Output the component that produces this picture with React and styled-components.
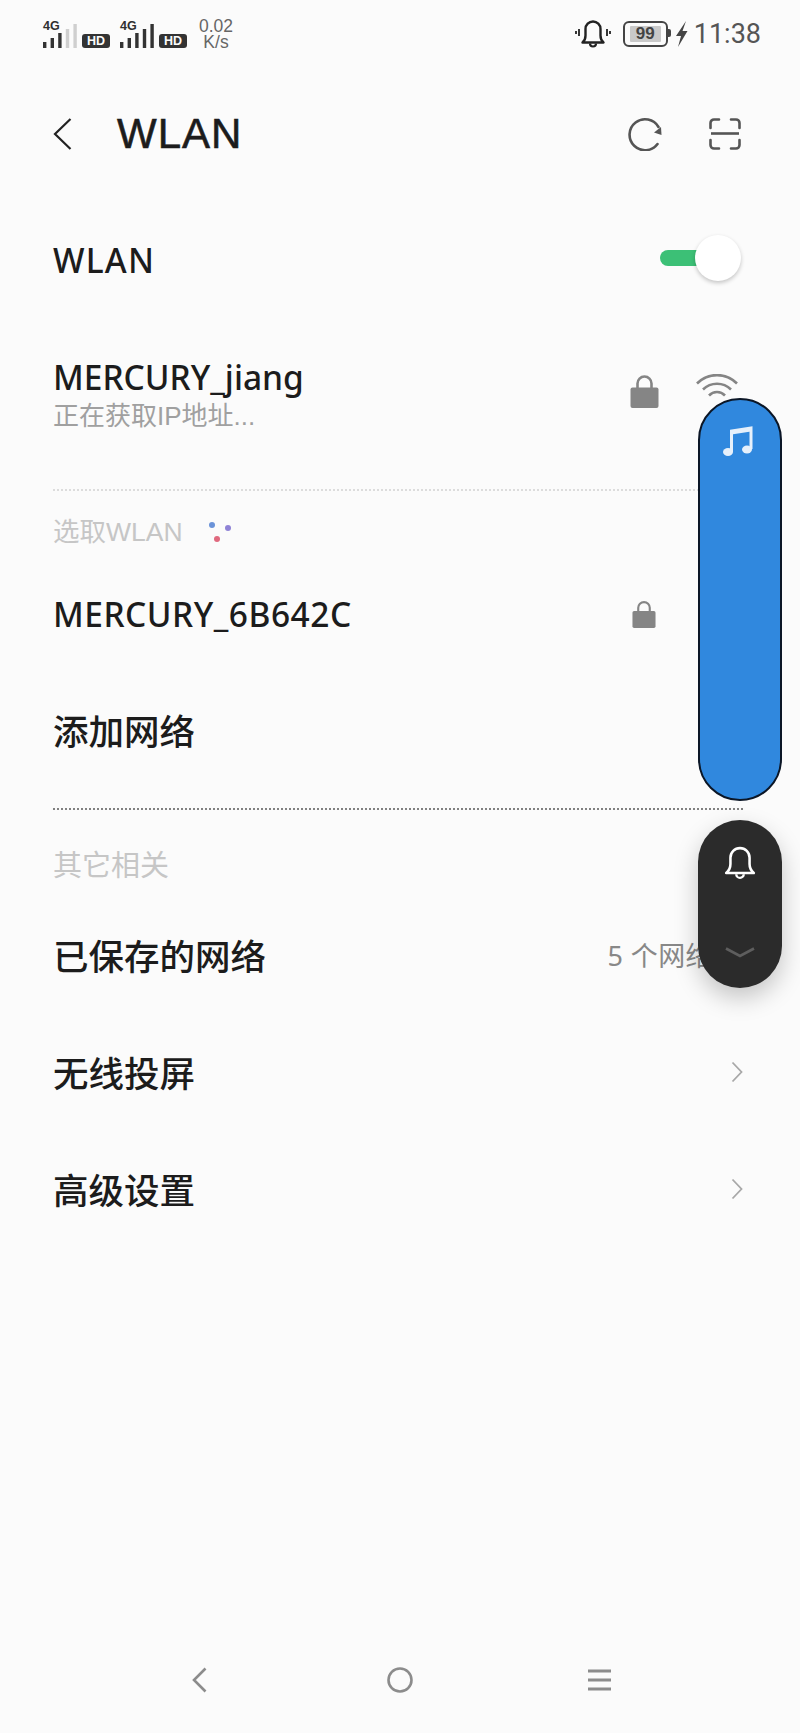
import styled, { createGlobalStyle } from "styled-components";

const GlobalStyle = createGlobalStyle`
    html, body {
        margin: 0;
        padding: 0;
        background: #fbfbfb;
    }
    * {
        box-sizing: border-box;
    }
`;

const FONT = `"Noto Sans", "Noto Sans CJK SC", sans-serif`;
const PLAIN_FONT = `"Liberation Sans", "Noto Sans CJK SC", sans-serif`;

const Page = styled.div`
    position: relative;
    display: flex;
    flex-direction: column;
    width: 800px;
    height: 1733px;
    overflow: hidden;
    background: #fbfbfb;
    color: #1c1c1c;
    font-family: ${FONT};
`;

const StatusBar = styled.div`
    display: flex;
    align-items: flex-start;
    height: 66px;
    padding: 18px 39px 0 43px;
    color: #555;
`;

const SignalGroup = styled.div`
    display: flex;
    align-items: flex-end;
    height: 30px;
    margin-right: ${p => p.$gap}px;
`;

const SignalIcon = styled.div`
    position: relative;
    width: 35px;
    height: 30px;
    margin-right: 4px;
    span {
        position: absolute;
        left: 0;
        top: 1px;
        font: 700 12.5px/14px "Liberation Sans", sans-serif;
        color: #2f2f2f;
    }
    svg {
        position: absolute;
        left: 0;
        top: 5px;
    }
`;

const HdBadge = styled.div`
    width: 28px;
    height: 14px;
    border-radius: 3px;
    background: #333;
    color: #fbfbfb;
    font: 700 12.5px/14px "Liberation Sans", sans-serif;
    text-align: center;
`;

const Speed = styled.div`
    width: 38px;
    text-align: center;
    font: 400 17.5px/16px "Liberation Sans", sans-serif;
    color: #666;
`;

const StatusRight = styled.div`
    display: flex;
    align-items: center;
    height: 32px;
    margin-left: auto;
`;

const Battery = styled.div`
    position: relative;
    width: 45px;
    height: 26px;
    margin: 0 7px 0 12px;
    padding: 3px 5px;
    border: 2px solid #444;
    border-radius: 6px;
    &::after {
        content: "";
        position: absolute;
        right: -5px;
        top: 6px;
        width: 3px;
        height: 8px;
        background: #444;
        border-radius: 0 2px 2px 0;
    }
`;

const BatteryLevel = styled.div`
    height: 100%;
    background: #c9c9c9;
    border-radius: 1px;
    color: #444;
    font: 700 17px/16px "Liberation Sans", sans-serif;
    text-align: center;
`;

const Clock = styled.div`
    margin-left: 6px;
    font: 400 27px/32px Roboto, sans-serif;
    color: #555;
`;

const Header = styled.header`
    display: flex;
    align-items: center;
    height: 136px;
    padding: 0 59px 0 53px;
`;

const Title = styled.h1`
    margin: 0 0 0 45px;
    font: 500 42px/1 "Liberation Sans", sans-serif;
    -webkit-text-stroke: 0.6px #1c1c1c;
    letter-spacing: 1px;
    color: #1c1c1c;
`;

const HeaderActions = styled.div`
    display: flex;
    align-items: center;
    gap: 46px;
    margin-left: auto;
`;

const Row = styled.div`
    display: flex;
    align-items: center;
    height: ${p => p.$height || 117}px;
    padding: 0 57px 0 53px;
`;

const RowLabel = styled.div`
    font-size: 33.5px;
    font-weight: 500;
    line-height: 44px;
    letter-spacing: ${p => p.$spacing || 0}px;
    color: #1c1c1c;
`;

const ChineseLabel = styled(RowLabel)`
    margin-top: 2px;
    font-size: 35.5px;
`;

const RowValue = styled.div`
    margin-left: auto;
    font-size: 27px;
    letter-spacing: 0.4px;
    color: #888;
    white-space: nowrap;
`;

const RowChevron = styled.svg`
    display: block;
    margin-left: ${p => (p.$auto ? "auto" : "18px")};
`;

const Switch = styled.div`
    position: relative;
    width: 81px;
    height: 46px;
    margin: 0 2px 4px auto;
`;

const SwitchTrack = styled.div`
    position: absolute;
    left: 0;
    top: 15px;
    width: 48px;
    height: 16px;
    border-radius: 8px;
    background: #3cc076;
`;

const SwitchKnob = styled.div`
    position: absolute;
    right: 0;
    top: 0;
    width: 46px;
    height: 46px;
    border-radius: 50%;
    background: #fff;
    box-shadow: 0 2px 4px rgba(0, 0, 0, 0.22);
`;

const CurrentNetwork = styled.div`
    display: flex;
    align-items: flex-start;
    height: 171px;
    padding: 37px 0 0 0;
    margin: 0 55px 0 53px;
`;

const NetworkText = styled.div`
    display: flex;
    flex-direction: column;
`;

const NetworkStatus = styled.div`
    font-family: ${PLAIN_FONT};
    font-size: 26px;
    line-height: 34px;
    color: #a0a0a0;
`;

const NetworkIcons = styled.div`
    display: flex;
    align-items: flex-start;
    gap: 37px;
    margin-left: auto;
    padding-top: 19px;
    margin-right: 7px;
`;

const SectionLabel = styled.div`
    display: flex;
    align-items: flex-start;
    gap: 24px;
    height: ${p => p.$height}px;
    padding: ${p => p.$top}px 0 0 53px;
    font-family: ${PLAIN_FONT};
    font-size: ${p => p.$size}px;
    line-height: 32px;
    color: #c6c6c6;
`;

const Divider = styled.div`
    height: 2px;
    margin: ${p => p.$top || 0}px 55px 0 53px;
    background-image: linear-gradient(to right, ${p => p.$color} 50%, transparent 50%);
    background-size: 4px 2px;
`;

const LockSlot = styled.div`
    margin-left: auto;
    margin-right: 87px;
`;

const NavBar = styled.nav`
    display: flex;
    align-items: center;
    justify-content: space-between;
    height: 40px;
    margin-top: auto;
    margin-bottom: 33px;
    padding: 0 189px 0 192px;
`;

const FloatingPill = styled.div`
    position: absolute;
    left: 698px;
    display: flex;
    flex-direction: column;
    align-items: center;
    width: 84px;
    border-radius: 42px;
`;

const MusicPill = styled(FloatingPill)`
    top: 398px;
    height: 403px;
    padding: 25px 4px 0 0;
    background: #3088de;
    border: 2px solid #0b1626;
`;

const NoticePill = styled(FloatingPill)`
    top: 820px;
    height: 168px;
    justify-content: space-between;
    padding: 26px 0 29px;
    background: #2b2b2b;
    box-shadow: 0 10px 24px rgba(0, 0, 0, 0.22);
`;

const Lock = ({ width, height, color = "#858585" }) => (
    <svg width={width} height={height} viewBox="0 0 29 34" style={{ display: "block" }}>
        <path d="M7.5 15V9.5a7 7 0 0 1 14 0V15" fill="none" stroke={color} strokeWidth="2.6" />
        <rect x="0.5" y="13.5" width="28" height="20.5" rx="2" fill={color} />
    </svg>
);

const Chevron = ({ auto }) => (
    <RowChevron $auto={auto} width="12" height="22" viewBox="0 0 12 22">
        <path d="M1.5 1.5L10.5 11L1.5 20.5" fill="none" stroke="#a8a8a8" strokeWidth="1.8" />
    </RowChevron>
);

const Bars = ({ faded }) => (
    <svg width="35" height="25" viewBox="0 0 35 25">
        {[6, 10, 15, 19, 24].map((h, i) => (
            <rect
                key={i}
                x={i * 7.6}
                y={25 - h}
                width="3.4"
                height={h}
                fill={faded && i > 2 ? "#cfcfcf" : "#333"}
            />
        ))}
    </svg>
);

const Bell = ({ color }) => (
    <svg width="32" height="34" viewBox="0 0 30 32" style={{ display: "block" }}>
        <path
            d="M2 25.5c3-2.5 4-4.5 4-8.5V11a9 9 0 0 1 18 0v6c0 4 1 6 4 8.5z"
            fill="none"
            stroke={color}
            strokeWidth="2.4"
            strokeLinejoin="round"
        />
        <path d="M11.5 26.5a3.5 3.5 0 0 0 7 0" fill="none" stroke={color} strokeWidth="2.2" />
    </svg>
);

const App = () => {
    return (
        <Page>
            <GlobalStyle />
            <StatusBar>
                <SignalGroup $gap={10}>
                    <SignalIcon>
                        <span>4G</span>
                        <Bars faded />
                    </SignalIcon>
                    <HdBadge>HD</HdBadge>
                </SignalGroup>
                <SignalGroup $gap={10}>
                    <SignalIcon>
                        <span>4G</span>
                        <Bars />
                    </SignalIcon>
                    <HdBadge>HD</HdBadge>
                </SignalGroup>
                <Speed>
                    0.02
                    <br />
                    K/s
                </Speed>
                <StatusRight>
                    <svg width="36" height="30" viewBox="0 0 36 30">
                        <path
                            d="M7.5 23.5c2.5-2 3-3.5 3-7V10a7.5 7.5 0 0 1 15 0v6.5c0 3.5.5 5 3 7z"
                            fill="none"
                            stroke="#222"
                            strokeWidth="2.4"
                            strokeLinejoin="round"
                        />
                        <path d="M15 24.5a3 3 0 0 0 6 0" fill="none" stroke="#222" strokeWidth="2.2" />
                        <path d="M1 12v3M4 10v7M32 10v7M35 12v3" stroke="#222" strokeWidth="1.8" />
                    </svg>
                    <Battery>
                        <BatteryLevel>99</BatteryLevel>
                    </Battery>
                    <svg width="13" height="26" viewBox="0 0 13 26">
                        <path d="M11 0L1 15h5L3 26L12.5 10H7.5z" fill="#444" />
                    </svg>
                    <Clock>11:38</Clock>
                </StatusRight>
            </StatusBar>

            <Header>
                <svg width="19" height="32" viewBox="0 0 19 32">
                    <path d="M17.5 1L2 16L17.5 31" fill="none" stroke="#222" strokeWidth="2.2" />
                </svg>
                <Title>WLAN</Title>
                <HeaderActions>
                    <svg width="35" height="34" viewBox="0 0 35 34">
                        <path
                            d="M30.5 10A15.5 15.5 0 1 0 29.5 27"
                            fill="none"
                            stroke="#555"
                            strokeWidth="2.6"
                            strokeLinecap="round"
                        />
                        <path d="M26 15.5L33.5 18L33 10z" fill="#555" />
                    </svg>
                    <svg width="32" height="32" viewBox="0 0 32 32">
                        <path
                            d="M1.5 10V5a3.5 3.5 0 0 1 3.5-3.5h5M22 1.5h5a3.5 3.5 0 0 1 3.5 3.5v5M1.5 22v5a3.5 3.5 0 0 0 3.5 3.5h5M22 30.5h5a3.5 3.5 0 0 0 3.5-3.5v-5"
                            fill="none"
                            stroke="#555"
                            strokeWidth="2.6"
                            strokeLinecap="round"
                        />
                        <path d="M2 15.5h28" stroke="#555" strokeWidth="2.6" />
                    </svg>
                </HeaderActions>
            </Header>

            <Row $height={116}>
                <RowLabel $spacing={1.2}>WLAN</RowLabel>
                <Switch>
                    <SwitchTrack />
                    <SwitchKnob />
                </Switch>
            </Row>

            <CurrentNetwork>
                <NetworkText>
                    <RowLabel>MERCURY_jiang</RowLabel>
                    <NetworkStatus>正在获取IP地址...</NetworkStatus>
                </NetworkText>
                <NetworkIcons>
                    <Lock width={29} height={34} />
                    <svg width="42" height="30" viewBox="0 0 42 30">
                        <path
                            d="M1 9.5a28 28 0 0 1 40 0M7 15.5a20 20 0 0 1 28 0M13 21.5a11 11 0 0 1 16 0"
                            fill="none"
                            stroke="#858585"
                            strokeWidth="2.6"
                        />
                    </svg>
                </NetworkIcons>
            </CurrentNetwork>

            <Divider $color="#dcdcdc" />

            <SectionLabel $height={71} $top={25} $size={26.5}>
                选取WLAN
                <svg width="32" height="30" viewBox="0 0 32 30">
                    <circle cx="5" cy="9" r="3" fill="#6b93d8" />
                    <circle cx="21" cy="12" r="3" fill="#8f83d6" />
                    <circle cx="10" cy="23" r="3" fill="#e0697e" />
                </svg>
            </SectionLabel>

            <Row $height={104}>
                <RowLabel $spacing={0.5}>MERCURY_6B642C</RowLabel>
                <LockSlot>
                    <Lock width={24} height={28} />
                </LockSlot>
            </Row>

            <Row $height={128}>
                <ChineseLabel>添加网络</ChineseLabel>
            </Row>

            <Divider $color="#808080" $top={14} />

            <SectionLabel $height={86} $top={40} $size={29}>其它相关</SectionLabel>

            <Row>
                <ChineseLabel>已保存的网络</ChineseLabel>
                <RowValue>5 个网络</RowValue>
                <Chevron />
            </Row>
            <Row>
                <ChineseLabel>无线投屏</ChineseLabel>
                <Chevron auto />
            </Row>
            <Row>
                <ChineseLabel>高级设置</ChineseLabel>
                <Chevron auto />
            </Row>

            <NavBar>
                <svg width="20" height="26" viewBox="0 0 20 26">
                    <path d="M13.5 1.5L2 13L13.5 24.5" fill="none" stroke="#8c8c8c" strokeWidth="2.6" />
                </svg>
                <svg width="26" height="26" viewBox="0 0 26 26">
                    <circle cx="13" cy="13" r="11.5" fill="none" stroke="#8c8c8c" strokeWidth="2.6" />
                </svg>
                <svg width="23" height="24" viewBox="0 0 23 24">
                    <path d="M0 3h23M0 12h23M0 21h23" stroke="#8c8c8c" strokeWidth="2.8" />
                </svg>
            </NavBar>

            <MusicPill>
                <svg width="30" height="32" viewBox="0 0 30 32">
                    <path d="M8.5 27V6L28 3v21" fill="none" stroke="#e6f0fb" strokeWidth="3" />
                    <path d="M8.5 5.5L28 2.5v4L8.5 9.5z" fill="#e6f0fb" />
                    <ellipse cx="5" cy="27" rx="5" ry="4" fill="#e6f0fb" />
                    <ellipse cx="24" cy="24.5" rx="5" ry="4" fill="#e6f0fb" />
                </svg>
            </MusicPill>

            <NoticePill>
                <Bell color="#fff" />
                <svg width="30" height="12" viewBox="0 0 30 12">
                    <path d="M1 1.5L15 9L29 1.5" fill="none" stroke="#5e5e5e" strokeWidth="2.6" />
                </svg>
            </NoticePill>
        </Page>
    );
};

export default App;
